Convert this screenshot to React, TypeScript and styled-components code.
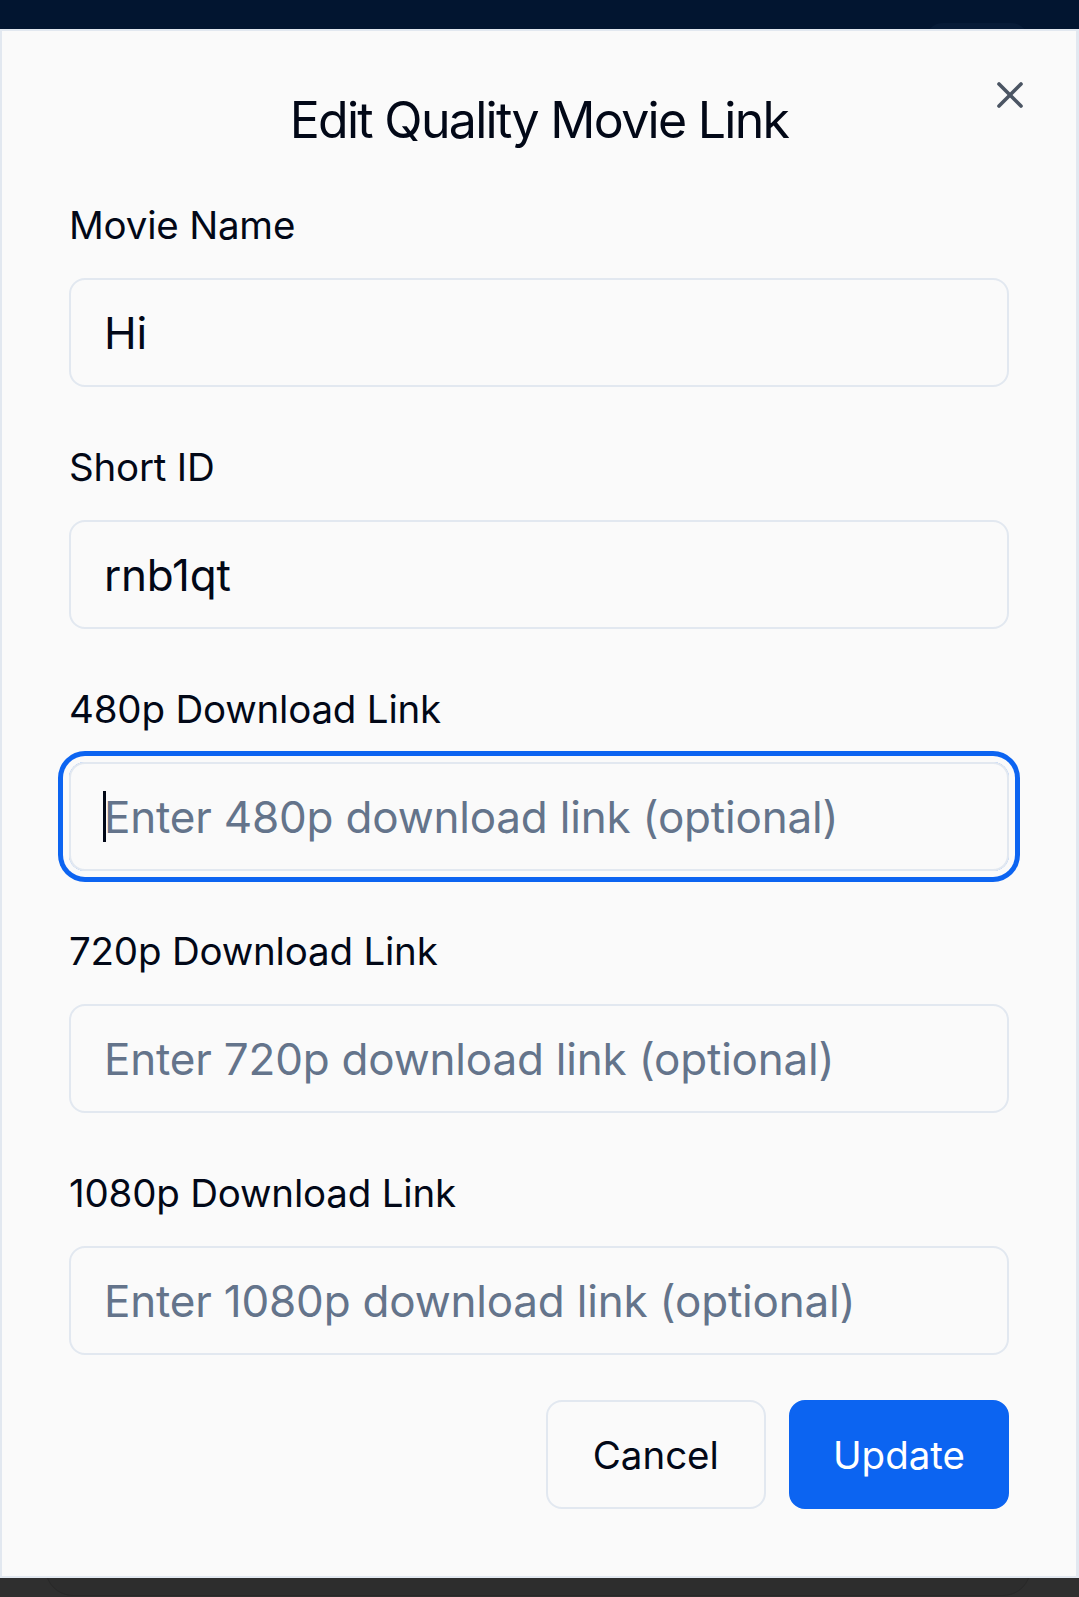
import React from 'react';
import styled, { createGlobalStyle } from 'styled-components';
import { X } from 'lucide-react';

const Global = createGlobalStyle`
  html, body { margin: 0; padding: 0; }
  body {
    font-family: Inter, "Noto Sans", "Liberation Sans", sans-serif;
    background: #2f2f2f;
    -webkit-font-smoothing: antialiased;
  }
  * { box-sizing: border-box; }
`;

const Screen = styled.div`
  position: relative;
  width: 1079px;
  height: 1597px;
  overflow: hidden;
  background: #2f2f2f;
  display: flex;
  flex-direction: column;
`;

const TopBar = styled.header`
  height: 140px;
  background: #021530;
  display: flex;
  justify-content: flex-end;
  padding: 23px 50px 0 0;
`;

const BarButton = styled.div`
  width: 104px;
  height: 70px;
  border-radius: 18px;
  background: #071b37;
`;

const Backdrop = styled.main`
  flex: 1;
  display: flex;
  flex-direction: column;
  justify-content: flex-end;
  padding: 0 48px 0 45px;
`;

const BackCard = styled.div`
  height: 300px;
  margin-bottom: 1px;
  border-radius: 28px;
  background: #2d2d2d;
  border: 1px solid #282828;
`;

const Dialog = styled.div`
  position: absolute;
  top: 29px;
  left: 0;
  width: 1079px;
  height: 1549px;
  background: #fafafa;
  border: 2px solid #e2e8f0;
  border-right-width: 3px;
  padding: 64px 67px 66px 67px;
  display: flex;
  flex-direction: column;
`;

const CloseButton = styled.button`
  position: absolute;
  top: 42px;
  right: 44px;
  width: 44px;
  height: 44px;
  padding: 0;
  border: none;
  background: transparent;
  color: #4b5563;
  display: flex;
  align-items: center;
  justify-content: center;
  cursor: pointer;
`;

const Title = styled.h2`
  margin: 0 0 61px 0;
  font-size: 50px;
  line-height: 50px;
  font-weight: 400;
  letter-spacing: -1.7px;
  color: #020817;
  text-align: center;
`;

const Form = styled.form`
  display: flex;
  flex-direction: column;
  gap: 61px;
`;

const Field = styled.div`
  display: flex;
  flex-direction: column;
  gap: 33.5px;
`;

const Label = styled.label`
  font-size: 38.5px;
  line-height: 38.5px;
  font-weight: 400;
  letter-spacing: -0.2px;
  color: #020817;
`;

const InputWrap = styled.div<{ $focused?: boolean }>`
  position: relative;
  border-radius: 16px;
  box-shadow: ${(p) =>
    p.$focused ? '0 0 0 6px #fafafa, 0 0 0 11px #0c64f1' : 'none'};
`;

const Input = styled.input`
  display: block;
  width: 100%;
  height: 109px;
  border: 2px solid #e2e8f0;
  border-radius: 16px;
  background: #fafafa;
  padding: 0 33px;
  font-family: inherit;
  font-size: 44px;
  letter-spacing: -0.2px;
  color: #020817;
  outline: none;
  caret-color: transparent;
  &::placeholder {
    color: #64748b;
  }
`;

const Caret = styled.span`
  position: absolute;
  left: 34px;
  top: 29px;
  width: 3px;
  height: 51px;
  background: #020817;
`;

const Footer = styled.div`
  display: flex;
  justify-content: flex-end;
  gap: 23px;
  margin-top: 45px;
`;

const Button = styled.button<{ $primary?: boolean }>`
  height: 109px;
  padding: 0 ${(p) => (p.$primary ? '42px' : '45px')};
  border-radius: 16px;
  font-family: inherit;
  font-size: 38.5px;
  font-weight: 400;
  border: 2px solid ${(p) => (p.$primary ? '#0c64f1' : '#e2e8f0')};
  background: ${(p) => (p.$primary ? '#0c64f1' : '#fafafa')};
  color: ${(p) => (p.$primary ? '#ffffff' : '#020817')};
  cursor: pointer;
`;

type FieldDef = { label: string; value?: string; placeholder?: string; focused?: boolean };

const fields: FieldDef[] = [
  { label: 'Movie Name', value: 'Hi' },
  { label: 'Short ID', value: 'rnb1qt' },
  { label: '480p Download Link', placeholder: 'Enter 480p download link (optional)', focused: true },
  { label: '720p Download Link', placeholder: 'Enter 720p download link (optional)' },
  { label: '1080p Download Link', placeholder: 'Enter 1080p download link (optional)' },
];

export default function App() {
  return (
    <>
      <Global />
      <Screen>
        <TopBar>
          <BarButton />
        </TopBar>
        <Backdrop>
          <BackCard />
        </Backdrop>
        <Dialog role="dialog">
          <CloseButton aria-label="Close">
            <X size={44} strokeWidth={2} />
          </CloseButton>
          <Title>Edit Quality Movie Link</Title>
          <Form onSubmit={(e) => e.preventDefault()}>
            {fields.map((f) => (
              <Field key={f.label}>
                <Label>{f.label}</Label>
                <InputWrap $focused={f.focused}>
                  <Input defaultValue={f.value} placeholder={f.placeholder} />
                  {f.focused && <Caret />}
                </InputWrap>
              </Field>
            ))}
          </Form>
          <Footer>
            <Button type="button">Cancel</Button>
            <Button type="button" $primary>
              Update
            </Button>
          </Footer>
        </Dialog>
      </Screen>
    </>
  );
}
